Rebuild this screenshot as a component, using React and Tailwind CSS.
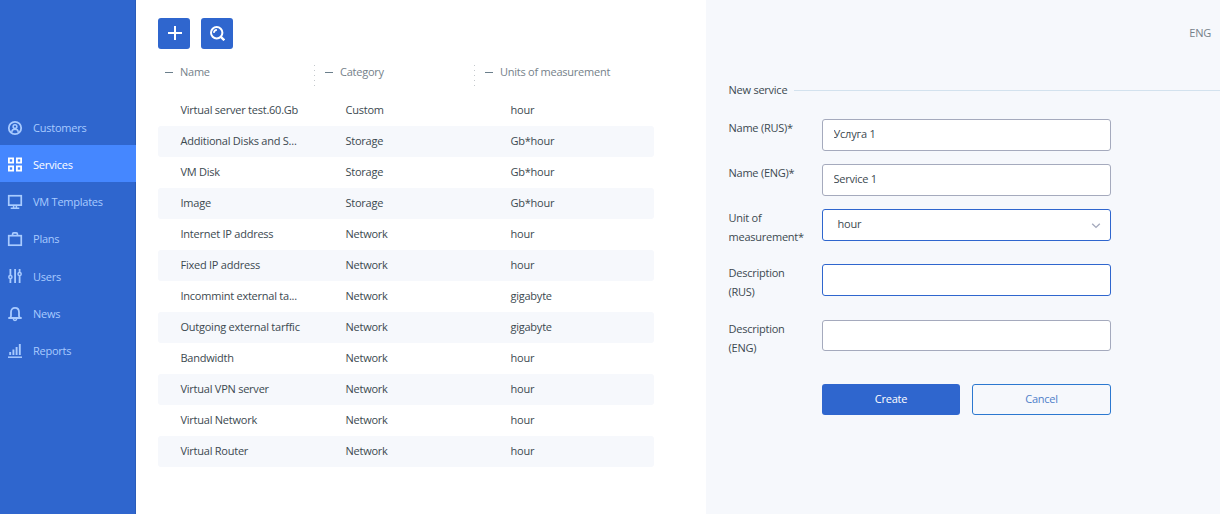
const stroke = { fill: "none", stroke: "currentColor", strokeWidth: 1.8 };

const icons = {
  customers: (
    <g {...stroke}>
      <circle cx="7" cy="7" r="6.2" />
      <circle cx="7" cy="5.6" r="1.9" strokeWidth="1.5" />
      <path d="M3.9 11.6V10.6C3.9 8.9 5 8.2 7 8.2s3.1.7 3.1 2.4v1" strokeWidth="1.5" />
    </g>
  ),
  services: (
    <g {...stroke} strokeWidth="1.8">
      <rect x="0.9" y="0.4" width="4.2" height="4.2" />
      <rect x="8.9" y="0.4" width="4.2" height="4.2" />
      <rect x="0.9" y="8.4" width="4.2" height="4.2" />
      <rect x="8.9" y="8.4" width="4.2" height="4.2" />
    </g>
  ),
  templates: (
    <g {...stroke} strokeWidth="1.7">
      <rect x="0.75" y="0.75" width="12.5" height="9.4" />
      <path d="M5.6 10v3M8.4 10v3M2.7 13.3h8.6" strokeWidth="1.5" />
    </g>
  ),
  plans: (
    <g {...stroke} strokeWidth="1.7">
      <rect x="0.75" y="3.7" width="12.5" height="9.5" />
      <path d="M4.6 3.5V1.9Q4.6 0.8 5.7 0.8h2.6Q9.4 0.8 9.4 1.9v1.6" />
    </g>
  ),
  users: (
    <g {...stroke}>
      <path d="M2.4 0v6M2.4 10v4M7.1 0v14M11.6 0v3.4M11.6 7v7" />
      <circle cx="2.4" cy="8" r="1.6" strokeWidth="1.5" />
      <circle cx="11.6" cy="5" r="1.6" strokeWidth="1.5" />
    </g>
  ),
  news: (
    <g {...stroke}>
      <path d="M0.3 11h13.4M2.2 10.8L3 9V5.2C3 2.5 4.6 .8 7 .8s4 1.7 4 4.4V9l.8 1.8" />
      <path d="M5.2 11.5Q5.4 13.4 7 13.4t1.8-1.9" strokeWidth="1.5" />
    </g>
  ),
  reports: (
    <g {...stroke}>
      <path d="M0 13.2h14" strokeWidth="1.5" />
      <path d="M2.2 8v3M5.4 5.5V11M8.6 3V11M11.8 0V11" strokeWidth="1.9" />
    </g>
  ),
};

const nav = [
  ["Customers", "customers"],
  ["Services", "services"],
  ["VM Templates", "templates"],
  ["Plans", "plans"],
  ["Users", "users"],
  ["News", "news"],
  ["Reports", "reports"],
];

const rows = [
  ["Virtual server test.60.Gb", "Custom", "hour"],
  ["Additional Disks and S...", "Storage", "Gb*hour"],
  ["VM Disk", "Storage", "Gb*hour"],
  ["Image", "Storage", "Gb*hour"],
  ["Internet IP address", "Network", "hour"],
  ["Fixed IP address", "Network", "hour"],
  ["Incommint external ta...", "Network", "gigabyte"],
  ["Outgoing external tarffic", "Network", "gigabyte"],
  ["Bandwidth", "Network", "hour"],
  ["Virtual VPN server", "Network", "hour"],
  ["Virtual Network", "Network", "hour"],
  ["Virtual Router", "Network", "hour"],
];

function Sidebar() {
  return (
    <nav className="flex w-[136px] shrink-0 flex-col border-r border-[#2a5cb9] bg-[#2f66ce] pt-[108px]">
      {nav.map(([label, icon]) => (
        <a
          key={label}
          className={
            label === "Services"
              ? "-mr-px flex h-[37.2px] items-center gap-[11px] bg-[#4587ff] pl-2 text-white"
              : "flex h-[37.2px] items-center gap-[11px] pl-2 text-[#a9cbff]"
          }
        >
          <svg className="mt-[2px] size-[14px] shrink-0 overflow-visible" viewBox="0 0 14 14">
            {icons[icon]}
          </svg>
          <span className="pt-[3px]">{label}</span>
        </a>
      ))}
    </nav>
  );
}

function HeaderCell({ children, divided }) {
  return (
    <div className="flex h-[22px] w-[160px] items-start">
      <span className="mt-[7px] mr-[7px] ml-[7px] h-px w-2 bg-[#6b7f8c]" />
      <span className="grow whitespace-nowrap leading-[14px]">{children}</span>
      {divided && (
        <svg className="mr-[3px] h-[22px] w-px shrink-0" viewBox="0 0 1 22">
          <path d="M.5 0v22" stroke="#c3c8cc" strokeDasharray="1 4" />
        </svg>
      )}
    </div>
  );
}

function Field({ label, children, className }) {
  return (
    <div className={"flex items-start " + className}>
      <label className="-mt-px w-[93.5px] shrink-0 leading-[19px]">{label}</label>
      {children}
    </div>
  );
}

export default function App() {
  return (
    <div className="flex h-[514px] w-[1220px] overflow-hidden bg-white font-['Open_Sans',sans-serif] text-[11px] tracking-[-0.24px] text-[#3c4950]">
      <Sidebar />
      <main className="w-[570px] shrink-0 pt-[18px] pl-[22px]">
        <div className="flex gap-[11px]">
          <button className="flex h-[31px] w-8 items-center justify-center rounded-[3px] bg-[#2f66ce] text-white">
            <svg className="mb-px ml-[2px] size-[14px]" viewBox="0 0 14 14">
              <path d="M7 0v14M0 7h14" stroke="currentColor" strokeWidth="2" />
            </svg>
          </button>
          <button className="flex h-[31px] w-8 items-center justify-center rounded-[3px] bg-[#2f66ce] text-white">
            <svg className="mb-px ml-px size-[15px]" viewBox="0 0 15 15" fill="none" stroke="currentColor">
              <circle cx="6.7" cy="6.7" r="5.7" strokeWidth="2" />
              <path d="M10.6 10.6l3.7 3.7" strokeWidth="2.3" />
              <path d="M3.8 6.9Q4 4.1 6.9 3.9" strokeWidth="1.6" />
            </svg>
          </button>
        </div>
        <div className="mt-4 flex text-[#75818a]">
          <HeaderCell divided>Name</HeaderCell>
          <HeaderCell divided>Category</HeaderCell>
          <HeaderCell>Units of measurement</HeaderCell>
        </div>
        <div className="mt-2 w-[496px]">
          {rows.map(([name, category, unit]) => (
            <div
              key={name}
              className="grid h-[31px] grid-cols-[165px_165px_1fr] items-center rounded-[3px] pl-[22.5px] even:bg-[#f6f8fc]"
            >
              <span>{name}</span>
              <span>{category}</span>
              <span>{unit}</span>
            </div>
          ))}
        </div>
      </main>
      <section className="grow bg-[#f6f8fc] pt-[25px] pl-[22.5px]">
        <div className="pr-[9px] text-right leading-4 text-[#75818a]">ENG</div>
        <div className="mt-[41px] flex items-center gap-[7px]">
          <h2 className="leading-4">New service</h2>
          <span className="mt-px h-px grow bg-[#d3e2ee]" />
        </div>
        <form className="mt-[21px]">
          <Field label="Name (RUS)*" className="h-[45px]">
            <input
              defaultValue="Услуга 1"
              className="h-8 w-[289px] rounded-[3px] border border-[#a5aabd] bg-white px-[10.5px] pb-[3px]"
            />
          </Field>
          <Field label="Name (ENG)*" className="h-[45px]">
            <input
              defaultValue="Service 1"
              className="h-8 w-[289px] rounded-[3px] border border-[#a5aabd] bg-white px-[10.5px] pb-[3px]"
            />
          </Field>
          <Field label={<>Unit of<br />measurement*</>} className="h-[55px]">
            <div className="flex h-8 w-[289px] items-center justify-between rounded-[3px] border border-[#2f66ce] bg-white pr-[9px] pl-[14.5px]">
              <span className="pb-[2px]">hour</span>
              <svg className="mt-[2px] h-[6px] w-[10px]" viewBox="0 0 10 6">
                <path d="M1.2 .8L5 4.4 8.8 .8" fill="none" stroke="#a5aabd" strokeWidth="1.4" />
              </svg>
            </div>
          </Field>
          <Field label={<>Description<br />(RUS)</>} className="h-14">
            <input className="h-8 w-[289px] rounded-[3px] border border-[#2f66ce] bg-white px-[11px]" />
          </Field>
          <Field label={<>Description<br />(ENG)</>} className="h-16">
            <input className="h-[31px] w-[289px] rounded-[3px] border border-[#a5aabd] bg-white px-[11px]" />
          </Field>
          <div className="flex gap-3 pl-[93.5px]">
            <button type="button" className="h-[31px] w-[138px] rounded-[3px] bg-[#2f66ce] pb-px text-white">
              Create
            </button>
            <button
              type="button"
              className="h-[31px] w-[139px] rounded-[3px] border border-[#2b78d0] pb-px text-[#4f7fc9]"
            >
              Cancel
            </button>
          </div>
        </form>
      </section>
    </div>
  );
}
